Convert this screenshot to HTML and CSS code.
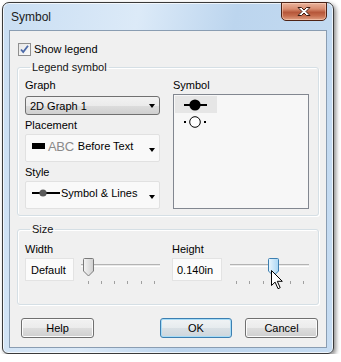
FILE: index.html
```html
<!DOCTYPE html>
<html lang="en">
<head>
    <meta charset="UTF-8">
    <title>Symbol</title>
    <link rel="stylesheet" href="styles.css">
</head>
<body>
    <div class="window">
        <div class="titlebar">
            <span class="title">Symbol</span>
            <button class="close-btn" title="Close">
                <svg width="16" height="11" viewBox="0 0 16 11">
                    <path d="M2 1.5h3.5L8 4l2.5-2.5H14L10 5.5l4 4h-3.5L8 7l-2.5 2.5H2l4-4z" fill="#fff" stroke="#3a1a10" stroke-width="1" stroke-linejoin="round"/>
                </svg>
            </button>
        </div>
        <div class="client">
            <label class="check-row">
                <span class="checkbox">
                    <svg width="11" height="11" viewBox="0 0 11 11">
                        <path d="M2 5.5l2.2 2.6L9 1.8" fill="none" stroke="#4c6aa8" stroke-width="1.8"/>
                    </svg>
                </span>
                Show legend
            </label>

            <fieldset class="group group-legend">
                <legend>Legend symbol</legend>
                <div class="cols">
                    <div class="col">
                        <div class="label">Graph</div>
                        <div class="combo combo-list">
                            <span>2D Graph 1</span>
                            <span class="arrow"></span>
                        </div>
                        <div class="label label-gap">Placement</div>
                        <div class="combo combo-owner">
                            <span class="swatch"></span>
                            <span class="abc">ABC</span>
                            <span>Before Text</span>
                            <span class="arrow arrow-low"></span>
                        </div>
                        <div class="label label-gap">Style</div>
                        <div class="combo combo-owner">
                            <svg class="style-icon" width="28" height="10" viewBox="0 0 28 10">
                                <path d="M0 5h28" stroke="#000" stroke-width="2"/>
                                <circle cx="11" cy="5" r="3.6" fill="#5a5a5a"/>
                            </svg>
                            <span>Symbol &amp; Lines</span>
                            <span class="arrow arrow-low"></span>
                        </div>
                    </div>
                    <div class="col col-right">
                        <div class="label">Symbol</div>
                        <div class="listbox">
                            <div class="list-item selected">
                                <svg width="26" height="14" viewBox="0 0 26 14">
                                    <path d="M0 7h23" stroke="#000" stroke-width="2"/>
                                    <circle cx="11" cy="7" r="5.6" fill="#000"/>
                                </svg>
                            </div>
                            <div class="list-item">
                                <svg width="26" height="14" viewBox="0 0 26 14">
                                    <rect x="0" y="6" width="2" height="2" fill="#000"/>
                                    <rect x="20" y="6" width="2" height="2" fill="#000"/>
                                    <circle cx="11" cy="7" r="5.3" fill="#fff" stroke="#000" stroke-width="1"/>
                                </svg>
                            </div>
                        </div>
                    </div>
                </div>
            </fieldset>

            <fieldset class="group group-size">
                <legend>Size</legend>
                <div class="cols">
                    <div class="col">
                        <div class="label">Width</div>
                        <div class="size-row">
                            <div class="textbox tb-width">Default</div>
                            <div class="slider sl-width">
                                <div class="track"></div>
                                <svg class="thumb" style="left: 2px" width="11" height="19" viewBox="0 0 11 19">
                                    <defs>
                                        <linearGradient id="tg" x1="0" x2="1" y1="0" y2="0">
                                            <stop offset="0" stop-color="#f4f4f4"/>
                                            <stop offset="1" stop-color="#cfcfcf"/>
                                        </linearGradient>
                                    </defs>
                                    <path d="M1.5 0.5h8a1 1 0 0 1 1 1V13l-5 5-5-5V1.5a1 1 0 0 1 1-1z" fill="url(#tg)" stroke="#7a7a7a"/>
                                </svg>
                                <div class="ticks">
                                    <i></i><i></i><i></i><i></i><i></i><i></i>
                                </div>
                            </div>
                        </div>
                    </div>
                    <div class="col col-right2">
                        <div class="label">Height</div>
                        <div class="size-row">
                            <div class="textbox tb-height">0.140in</div>
                            <div class="slider sl-height">
                                <div class="track"></div>
                                <svg class="thumb" style="left: 38px" width="11" height="19" viewBox="0 0 11 19">
                                    <defs>
                                        <linearGradient id="tb" x1="0" x2="1" y1="0" y2="0">
                                            <stop offset="0" stop-color="#eaf6fd"/>
                                            <stop offset="1" stop-color="#a9d6f4"/>
                                        </linearGradient>
                                    </defs>
                                    <path d="M1.5 0.5h8a1 1 0 0 1 1 1V13l-5 5-5-5V1.5a1 1 0 0 1 1-1z" fill="url(#tb)" stroke="#3c7fb1"/>
                                </svg>
                                <div class="ticks">
                                    <i></i><i></i><i></i><i></i><i></i><i></i>
                                </div>
                                <svg class="cursor" width="13" height="20" viewBox="0 0 13 20">
                                    <path d="M0.5 0.5v15l3.6-3.4 2.9 6.6 2.2-1-2.9-6.4h5z" fill="#fff" stroke="#000" stroke-linejoin="round"/>
                                </svg>
                            </div>
                        </div>
                    </div>
                </div>
            </fieldset>

            <div class="buttons">
                <button class="btn">Help</button>
                <span class="spacer"></span>
                <button class="btn btn-default">OK</button>
                <button class="btn">Cancel</button>
            </div>
        </div>
    </div>
</body>
</html>
```

FILE: styles.css
```css
body {
    margin: 0;
    background: #ffffff;
    font-family: 'Liberation Sans', Arial, sans-serif;
    font-size: 11px;
    color: #000000;
}
.window {
    box-sizing: border-box;
    margin: 2px 0 0 2px;
    width: 332px;
    height: 352px;
    padding: 0 6px 5px 6px;
    border: 1px solid #3a3a3a;
    border-radius: 7px 7px 6px 6px;
    background: linear-gradient(100deg, #c9def3 0%, #dceaf8 35%, #bcd5ee 60%, #c6dcf2 100%);
    box-shadow: inset 0 0 0 1px rgba(255, 255, 255, 0.7), 2px 2px 4px rgba(0, 0, 0, 0.45);
}
.titlebar {
    display: flex;
    align-items: flex-start;
    height: 27px;
}
.title {
    margin: 7px 0 0 2px;
    font-size: 12px;
    color: #1b1b1b;
    flex: 1;
}
.close-btn {
    width: 46px;
    height: 19px;
    margin-top: -1px;
    padding: 0;
    border: 1px solid #4e2316;
    border-radius: 0 0 5px 5px;
    background: linear-gradient(to bottom, #e9b39c 0%, #d98d70 35%, #b6573a 55%, #c56c4d 75%, #e0a083 100%);
    box-shadow: inset 0 0 0 1px rgba(255, 220, 200, 0.5);
    display: flex;
    align-items: center;
    justify-content: center;
}
.client {
    height: 318px;
    box-sizing: border-box;
    border: 1px solid #8a9db2;
    background: #f0f0f0;
    padding: 11px 7px 0 7px;
}
.check-row {
    display: flex;
    align-items: center;
    gap: 3px;
    height: 14px;
    padding-left: 1px;
}
.checkbox {
    box-sizing: border-box;
    width: 13px;
    height: 13px;
    border: 1px solid #8f8f8f;
    background: linear-gradient(to bottom right, #e6e6e6, #fbfbfb);
    display: flex;
    align-items: center;
    justify-content: center;
}
.group {
    margin: 4px 0 0 0;
    border: 1px solid #d5dfe5;
    border-radius: 3px;
    box-shadow: inset 1px 1px 0 #ffffff, 1px 1px 0 #ffffff;
    padding: 4px 9px 6px 7px;
    min-width: 0;
}
.group legend {
    padding: 0 2px;
    margin-left: 5px;
    line-height: 14px;
    color: #151515;
}
.cols {
    display: flex;
}
.col {
    width: 135px;
    display: flex;
    flex-direction: column;
}
.col-right {
    margin-left: 13px;
    width: 136px;
}
.label {
    line-height: 14px;
}
.label-gap {
    margin-top: 3px;
}
.combo {
    box-sizing: border-box;
    display: flex;
    align-items: center;
    position: relative;
}
.combo-list {
    height: 19px;
    margin-top: 4px;
    padding-left: 4px;
    border: 1px solid #707070;
    border-radius: 3px;
    background: linear-gradient(to bottom, #f2f2f2 0%, #ebebeb 50%, #dddddd 51%, #cfcfcf 100%);
}
.combo-owner {
    height: 28px;
    margin-top: 2px;
    padding: 0 0 4px 6px;
    border: 1px solid #e1e1e1;
    border-radius: 2px;
    background: #f9f9f9;
}
.arrow {
    margin-left: auto;
    margin-right: 4px;
    width: 0;
    height: 0;
    border-left: 3.5px solid transparent;
    border-right: 3.5px solid transparent;
    border-top: 4px solid #000000;
}
.arrow-low {
    margin-top: 8px;
    margin-right: 4px;
}
.swatch {
    width: 13px;
    height: 6px;
    background: #000000;
    margin-right: 3px;
}
.abc {
    font-size: 13px;
    color: #8a8a8a;
    font-weight: 300;
    margin-right: 4px;
    letter-spacing: -0.3px;
}
.style-icon {
    margin-right: 1px;
}
.listbox {
    box-sizing: border-box;
    height: 115px;
    margin-top: 2px;
    border: 1px solid #828790;
    background: #f7f7f7;
    padding: 1px;
}
.list-item {
    width: 42px;
    height: 17px;
    display: flex;
    align-items: center;
    padding-left: 9px;
    box-sizing: border-box;
}
.list-item.selected {
    background: #e6e6e6;
}
.group-size {
    margin-top: 6px;
    padding-top: 6px;
    padding-bottom: 18px;
}
.col-right2 {
    margin-left: 12px;
    width: 137px;
}
.size-row {
    display: flex;
    margin-top: 2px;
}
.textbox {
    box-sizing: border-box;
    height: 23px;
    border: 1px solid #e3e3e3;
    background: #fbfbfb;
    display: flex;
    align-items: center;
    padding-left: 5px;
}
.tb-width {
    width: 49px;
}
.tb-height {
    width: 50px;
    padding-left: 4px;
}
.slider {
    position: relative;
    height: 28px;
}
.sl-width {
    margin-left: 7px;
    width: 80px;
}
.sl-height {
    margin-left: 8px;
    width: 79px;
}
.track {
    margin-top: 6px;
    height: 1px;
    border-top: 1px solid #b3b3b3;
    background: #e9e9e9;
    border-bottom: 1px solid #ffffff;
}
.thumb {
    position: absolute;
    top: 0;
}
.ticks {
    display: flex;
    justify-content: space-between;
    margin-top: 14px;
    padding: 0 5px 0 7px;
}
.sl-height .ticks {
    padding: 0 5px 0 6px;
}
.ticks i {
    width: 1px;
    height: 3px;
    background: #a0a0a0;
}
.cursor {
    position: absolute;
    left: 41px;
    top: 12px;
}
.buttons {
    display: flex;
    margin-top: 13px;
    padding: 0 1px 0 4px;
    gap: 13px;
}
.spacer {
    flex: 1;
}
.btn {
    width: 73px;
    height: 20px;
    padding: 0;
    border: 1px solid #707070;
    border-radius: 3px;
    background: linear-gradient(to bottom, #f2f2f2 0%, #ebebeb 50%, #dddddd 51%, #cfcfcf 100%);
    box-shadow: inset 0 0 0 1px #fcfcfc;
    font-family: 'Liberation Sans', Arial, sans-serif;
    font-size: 11px;
    color: #000000;
}
.btn-default {
    width: 72px;
    border-color: #3c7fb1;
    box-shadow: inset 0 0 0 1px #a6dcf7;
    background: linear-gradient(to bottom, #f0f3f5 0%, #e6ebee 50%, #d9e0e5 51%, #cdd6dc 100%);
}
```
